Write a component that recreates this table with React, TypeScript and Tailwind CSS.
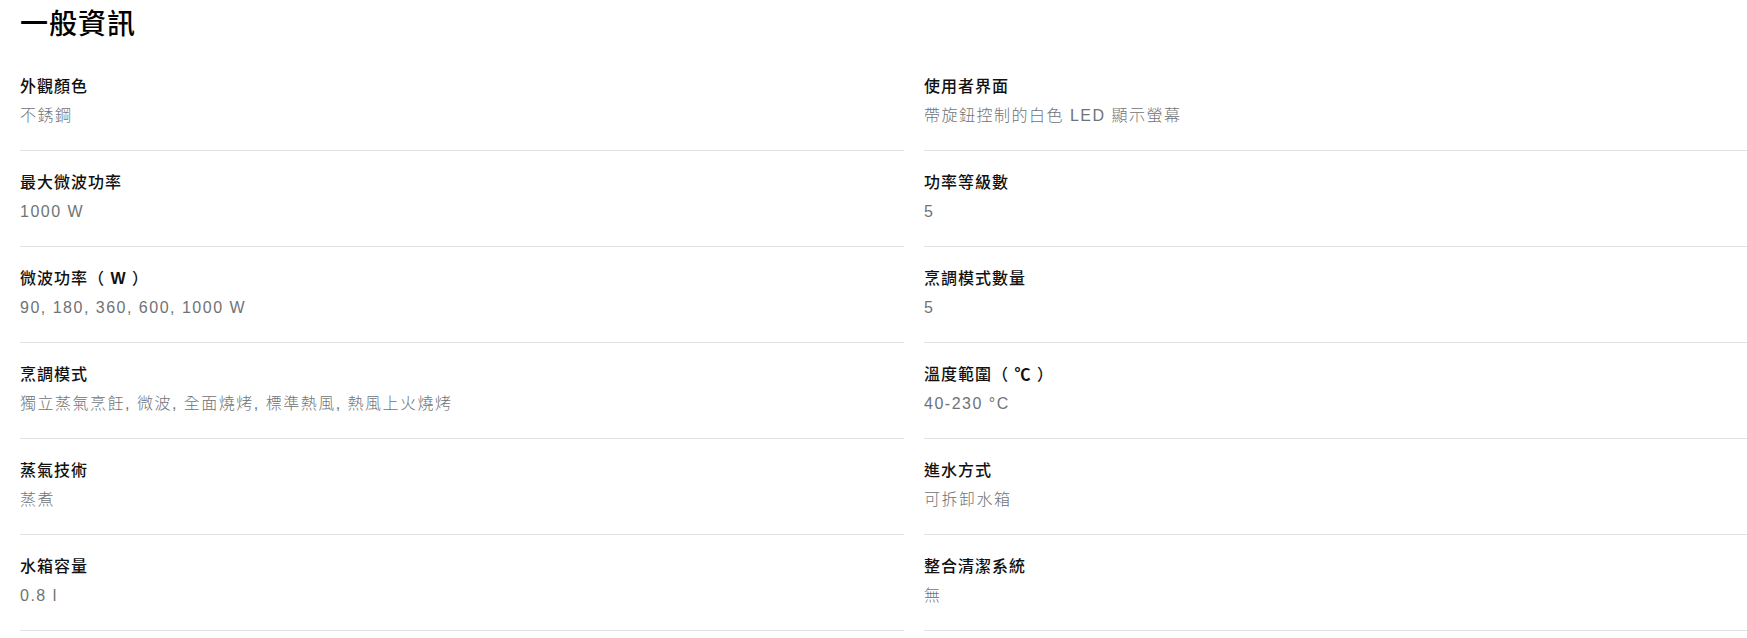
const ROWS: [string, string, string, string][] = [
  ['外觀顏色', '不銹鋼', '使用者界面', '帶旋鈕控制的白色 LED 顯示螢幕'],
  ['最大微波功率', '1000 W', '功率等級數', '5'],
  ['微波功率（ W ）', '90, 180, 360, 600, 1000 W', '烹調模式數量', '5'],
  ['烹調模式', '獨立蒸氣烹飪, 微波, 全面燒烤, 標準熱風, 熱風上火燒烤', '溫度範圍（ ℃ ）', '40-230 °C'],
  ['蒸氣技術', '蒸煮', '進水方式', '可拆卸水箱'],
  ['水箱容量', '0.8 l', '整合清潔系統', '無'],
]

function Label({ text }: { text: string }) {
  // the unit inside the full-width brackets is set bold in the reference
  const m = text.match(/^(.*)（ (.*) ）$/)
  if (!m) return <>{text}</>
  return (
    <>
      {m[1]}（ <span className="font-bold">{m[2]}</span> ）
    </>
  )
}

function Spec({ label, value }: { label: string; value: string }) {
  return (
    <div className="border-b border-[#e0e2e3] pt-5 pb-[22px]">
      <div className="text-[16px] leading-6 font-medium text-[#111] tracking-[1px]">
        <Label text={label} />
      </div>
      <div className="mt-[5px] text-[16px] leading-6 font-light text-[#6f7377] tracking-[1.5px]">{value}</div>
    </div>
  )
}

export default function App() {
  return (
    <div
      className="w-[1747px] h-[638px] overflow-hidden bg-white pl-5 pt-[7px]"
      style={{ fontFamily: '"Liberation Sans", "Noto Sans CJK TC", sans-serif' }}
    >
      <h2 className="text-[28px] leading-9 font-medium text-black tracking-[1px] mb-3">一般資訊</h2>
      <div className="grid grid-cols-[884px_884px] gap-x-5">
        {ROWS.map((r, i) => (
          <div key={i} className="contents">
            <Spec label={r[0]} value={r[1]} />
            <Spec label={r[2]} value={r[3]} />
          </div>
        ))}
      </div>
    </div>
  )
}
